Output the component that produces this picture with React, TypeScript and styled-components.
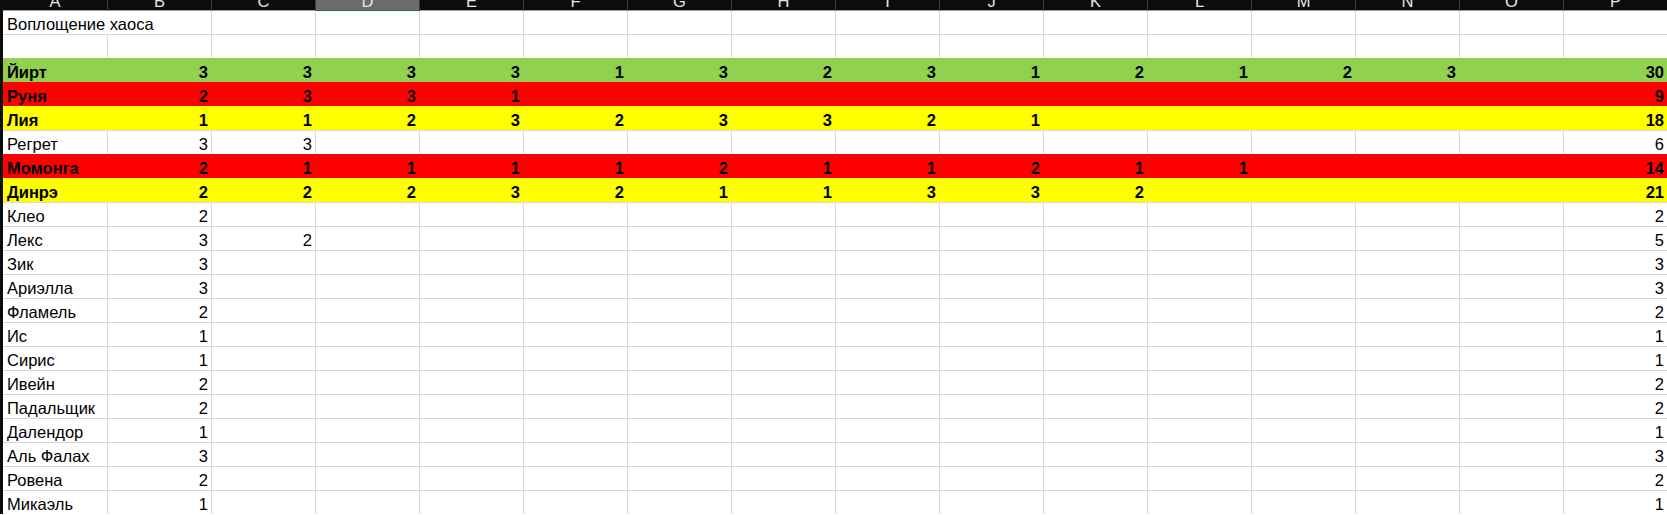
import styled, { createGlobalStyle } from "styled-components";

const GlobalStyle = createGlobalStyle`
  html, body {
    margin: 0;
    padding: 0;
    background: #ffffff;
  }
  body {
    font-family: "Liberation Sans", Arial, sans-serif;
    overflow: hidden;
  }
`;

type Fill = "none" | "green" | "red" | "yellow";

const fills: Record<Fill, string> = {
  none: "#ffffff",
  green: "#92d050",
  red: "#ff0000",
  yellow: "#ffff00",
};

const GRID = "#d8d8d8";
const COLUMNS = "ABCDEFGHIJKLMNOP".split("");
const SELECTED = "D";

type Player = { name: string; scores: number[]; fill?: Fill };

const players: Player[] = [
  { name: "Йирт", fill: "green", scores: [3, 3, 3, 3, 1, 3, 2, 3, 1, 2, 1, 2, 3] },
  { name: "Руня", fill: "red", scores: [2, 3, 3, 1] },
  { name: "Лия", fill: "yellow", scores: [1, 1, 2, 3, 2, 3, 3, 2, 1] },
  { name: "Регрет", scores: [3, 3] },
  { name: "Момонга", fill: "red", scores: [2, 1, 1, 1, 1, 2, 1, 1, 2, 1, 1] },
  { name: "Динрэ", fill: "yellow", scores: [2, 2, 2, 3, 2, 1, 1, 3, 3, 2] },
  { name: "Клео", scores: [2] },
  { name: "Лекс", scores: [3, 2] },
  { name: "Зик", scores: [3] },
  { name: "Ариэлла", scores: [3] },
  { name: "Фламель", scores: [2] },
  { name: "Ис", scores: [1] },
  { name: "Сирис", scores: [1] },
  { name: "Ивейн", scores: [2] },
  { name: "Падальщик", scores: [2] },
  { name: "Далендор", scores: [1] },
  { name: "Аль Фалах", scores: [3] },
  { name: "Ровена", scores: [2] },
  { name: "Микаэль", scores: [1] },
];

const App = () => {
  return (
    <>
      <GlobalStyle />
      <Sheet>
        <Corner />
        {COLUMNS.map((c) => (
          <ColHead key={c} selected={c === SELECTED}>
            <span>{c}</span>
          </ColHead>
        ))}

        <RowHead />
        <Cell first spill>
          Воплощение хаоса
        </Cell>
        {COLUMNS.slice(1).map((c) => (
          <Cell key={c} first />
        ))}

        <RowHead />
        {COLUMNS.map((c) => (
          <Cell key={c} />
        ))}

        {players.map((p) => {
          const fill = p.fill ?? "none";
          const bold = fill !== "none";
          const total = p.scores.reduce((a, b) => a + b, 0);
          return [
            <RowHead key={p.name + "-h"} />,
            <Cell key={p.name + "-a"} fill={fill} bold={bold}>
              {p.name}
            </Cell>,
            ...COLUMNS.slice(1, -1).map((c, i) => (
              <Cell key={p.name + c} fill={fill} bold={bold} numeric>
                {p.scores[i] ?? ""}
              </Cell>
            )),
            <Cell key={p.name + "-p"} fill={fill} bold={bold} numeric>
              {total}
            </Cell>,
          ];
        })}
      </Sheet>
    </>
  );
};

export default App;

const Sheet = styled.div`
  display: grid;
  grid-template-columns: 3px 105px repeat(15, 104px);
  grid-template-rows: 11px 23px;
  grid-auto-rows: 24px;
  width: 1667px;
  height: 515px;
  overflow: hidden;
  background: #ffffff;
`;

const Corner = styled.div`
  background: #0c0c0c;
  border-bottom: 1px solid #0c0c0c;
`;

const ColHead = styled.div<{ selected?: boolean }>`
  box-sizing: border-box;
  display: flex;
  align-items: flex-end;
  justify-content: center;
  overflow: hidden;
  background: ${({ selected }) => (selected ? "#6b6b6b" : "#0c0c0c")};
  border-right: 1px solid #3c3c3c;
  border-bottom: 1px solid ${({ selected }) => (selected ? "#1e7145" : "#9c9c9c")};
  color: #e6e6e6;
  font-size: 16.5px;
  line-height: 1;

  span {
    padding-bottom: 1px;
  }
`;

const RowHead = styled.div`
  background: #0c0c0c;
`;

const Cell = styled.div<{
  fill?: Fill;
  bold?: boolean;
  numeric?: boolean;
  first?: boolean;
  spill?: boolean;
}>`
  box-sizing: border-box;
  display: flex;
  align-items: flex-end;
  justify-content: ${({ numeric }) => (numeric ? "flex-end" : "flex-start")};
  padding: ${({ numeric }) => (numeric ? "0 3px 1px 0" : "0 0 1px 4px")};
  background: ${({ fill = "none" }) => fills[fill]};
  border-top: ${({ first, fill = "none" }) =>
    first ? "none" : `1px solid ${fill === "none" ? GRID : fills[fill]}`};
  border-right: 1px solid
    ${({ fill = "none", spill }) =>
      spill ? "transparent" : fill === "none" ? GRID : fills[fill]};
  color: #000000;
  font-size: 16.5px;
  line-height: 18px;
  font-weight: ${({ bold }) => (bold ? 700 : 400)};
  white-space: nowrap;
  overflow: ${({ spill }) => (spill ? "visible" : "hidden")};
  position: ${({ spill }) => (spill ? "relative" : "static")};
  z-index: ${({ spill }) => (spill ? 1 : "auto")};
`;
